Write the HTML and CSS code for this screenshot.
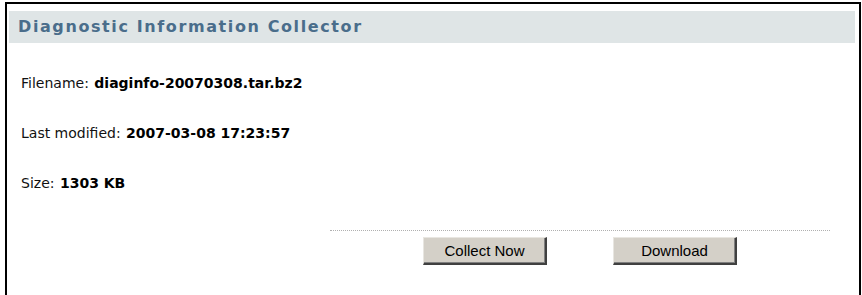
FILE: index.html
```html
<!DOCTYPE html>
<html>
<head>
<meta charset="utf-8">
<link rel="stylesheet" href="styles.css">
</head>
<body>
<div class="frame">
  <div class="header">Diagnostic Information Collector</div>
  <div class="row row-first"><span class="label">Filename:</span> <span class="value">diaginfo-20070308.tar.bz2</span></div>
  <div class="row"><span class="label">Last modified:</span> <span class="value">2007-03-08 17:23:57</span></div>
  <div class="row"><span class="label">Size:</span> <span class="value">1303 KB</span></div>
  <div class="actions">
    <button class="btn">Collect Now</button>
    <button class="btn">Download</button>
  </div>
</div>
</body>
</html>
```
FILE: styles.css
```css
html, body {
  margin: 0;
  padding: 0;
  background: #ffffff;
}
body {
  width: 862px;
  height: 295px;
  overflow: hidden;
}
.frame {
  margin: 2px 0 0 5px;
  width: 856px;
  height: 293px;
  border: 2px solid #000000;
  border-bottom: none;
  padding: 7px 4px 0 2px;
  box-sizing: border-box;
  font-family: "DejaVu Sans", Verdana, sans-serif;
}
.header {
  height: 32px;
  line-height: 32px;
  background: #dfe5e6;
  color: #4a6d8b;
  font-weight: bold;
  font-size: 16px;
  letter-spacing: 1.6px;
  padding-left: 9px;
}
.row {
  height: 50px;
  line-height: 20px;
  padding-left: 12px;
  color: #111;
  font-size: 14px;
}
.row-first {
  margin-top: 30px;
}
.label {
  font-size: 14px;
  font-weight: normal;
}
.value {
  font-size: 14px;
  font-weight: bold;
  margin-left: 1px;
  color: #000;
}
.actions {
  margin: 7px 25px 0 auto;
  width: 500px;
  border-top: 1px dotted #b0b0b0;
  padding-top: 6px;
  display: flex;
  justify-content: center;
  gap: 66px;
}
.btn {
  width: 124px;
  height: 28px;
  margin: 0;
  padding: 0;
  font-family: "Liberation Sans", Arial, sans-serif;
  font-size: 15px;
  color: #000;
  background: #d4d0c8;
  border-top: 1px solid #e8e6e1;
  border-left: 1px solid #e8e6e1;
  border-right: 2px solid #404040;
  border-bottom: 2px solid #404040;
  box-shadow: inset -1px -1px 0 #808080;
}
```
